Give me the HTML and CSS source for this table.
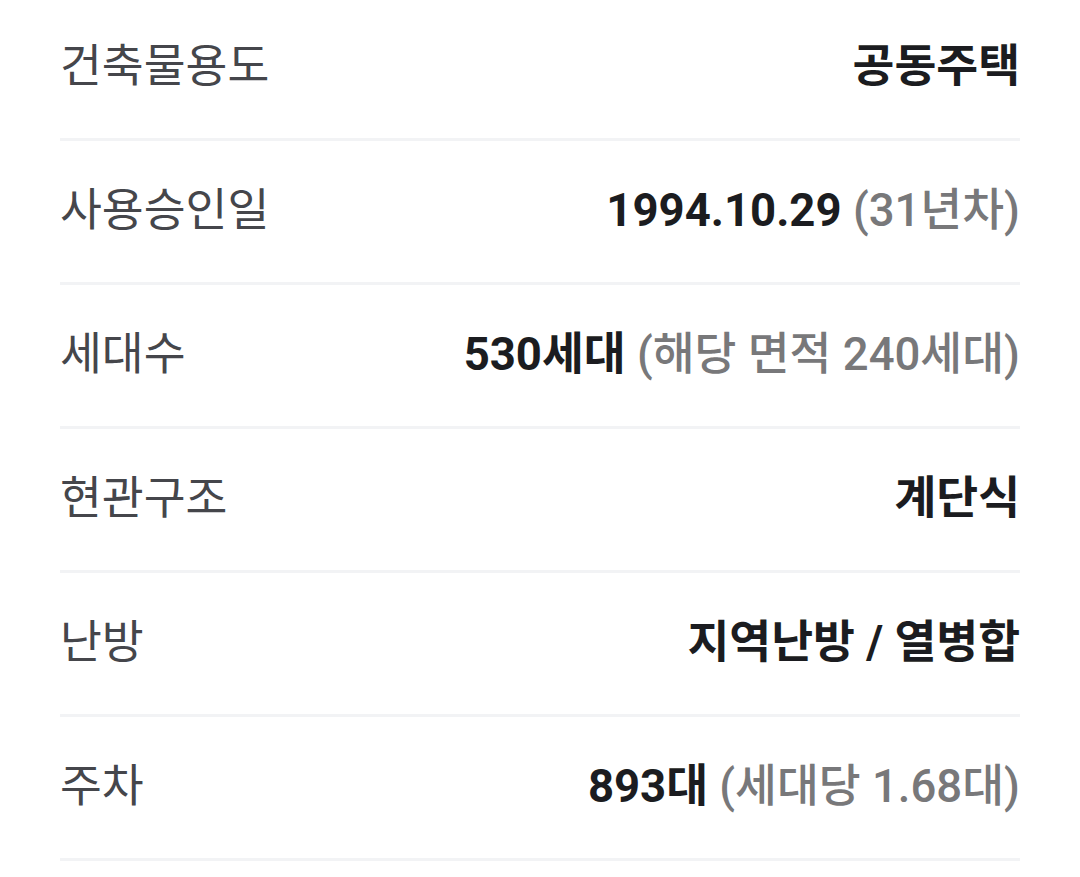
FILE: index.html
```html
<!DOCTYPE html>
<html lang="ko">
<head>
<meta charset="utf-8">
<link rel="stylesheet" href="styles.css">
</head>
<body>
<div class="list">
  <div class="row"><span class="label">건축물용도</span><span class="value">공동주택</span></div>
  <div class="row"><span class="label">사용승인일</span><span class="value">1994.10.29 <span class="sub">(31년차)</span></span></div>
  <div class="row"><span class="label">세대수</span><span class="value">530세대 <span class="sub">(해당 면적 240세대)</span></span></div>
  <div class="row"><span class="label">현관구조</span><span class="value">계단식</span></div>
  <div class="row"><span class="label">난방</span><span class="value">지역난방 / 열병합</span></div>
  <div class="row"><span class="label">주차</span><span class="value">893대 <span class="sub">(세대당 1.68대)</span></span></div>
</div>
</body>
</html>
```
FILE: styles.css
```css
html, body {
  margin: 0;
  padding: 0;
  background: #ffffff;
}
body {
  font-family: Roboto, "Noto Sans CJK KR", sans-serif;
}
.list {
  padding: 0 60px;
  margin-top: -3px;
  display: flex;
  flex-direction: column;
}
.row {
  height: 144px;
  border-bottom: 3px solid #f2f3f5;
  display: flex;
  align-items: center;
  justify-content: space-between;
  box-sizing: border-box;
}
.label {
  font-size: 45.5px;
  line-height: 1.2;
  color: #45464b;
  font-weight: 400;
}
.value {
  font-size: 45.5px;
  line-height: 1.2;
  color: #1b1c20;
  font-weight: 700;
}
.sub {
  color: #78787a;
  font-weight: 500;
}
```
